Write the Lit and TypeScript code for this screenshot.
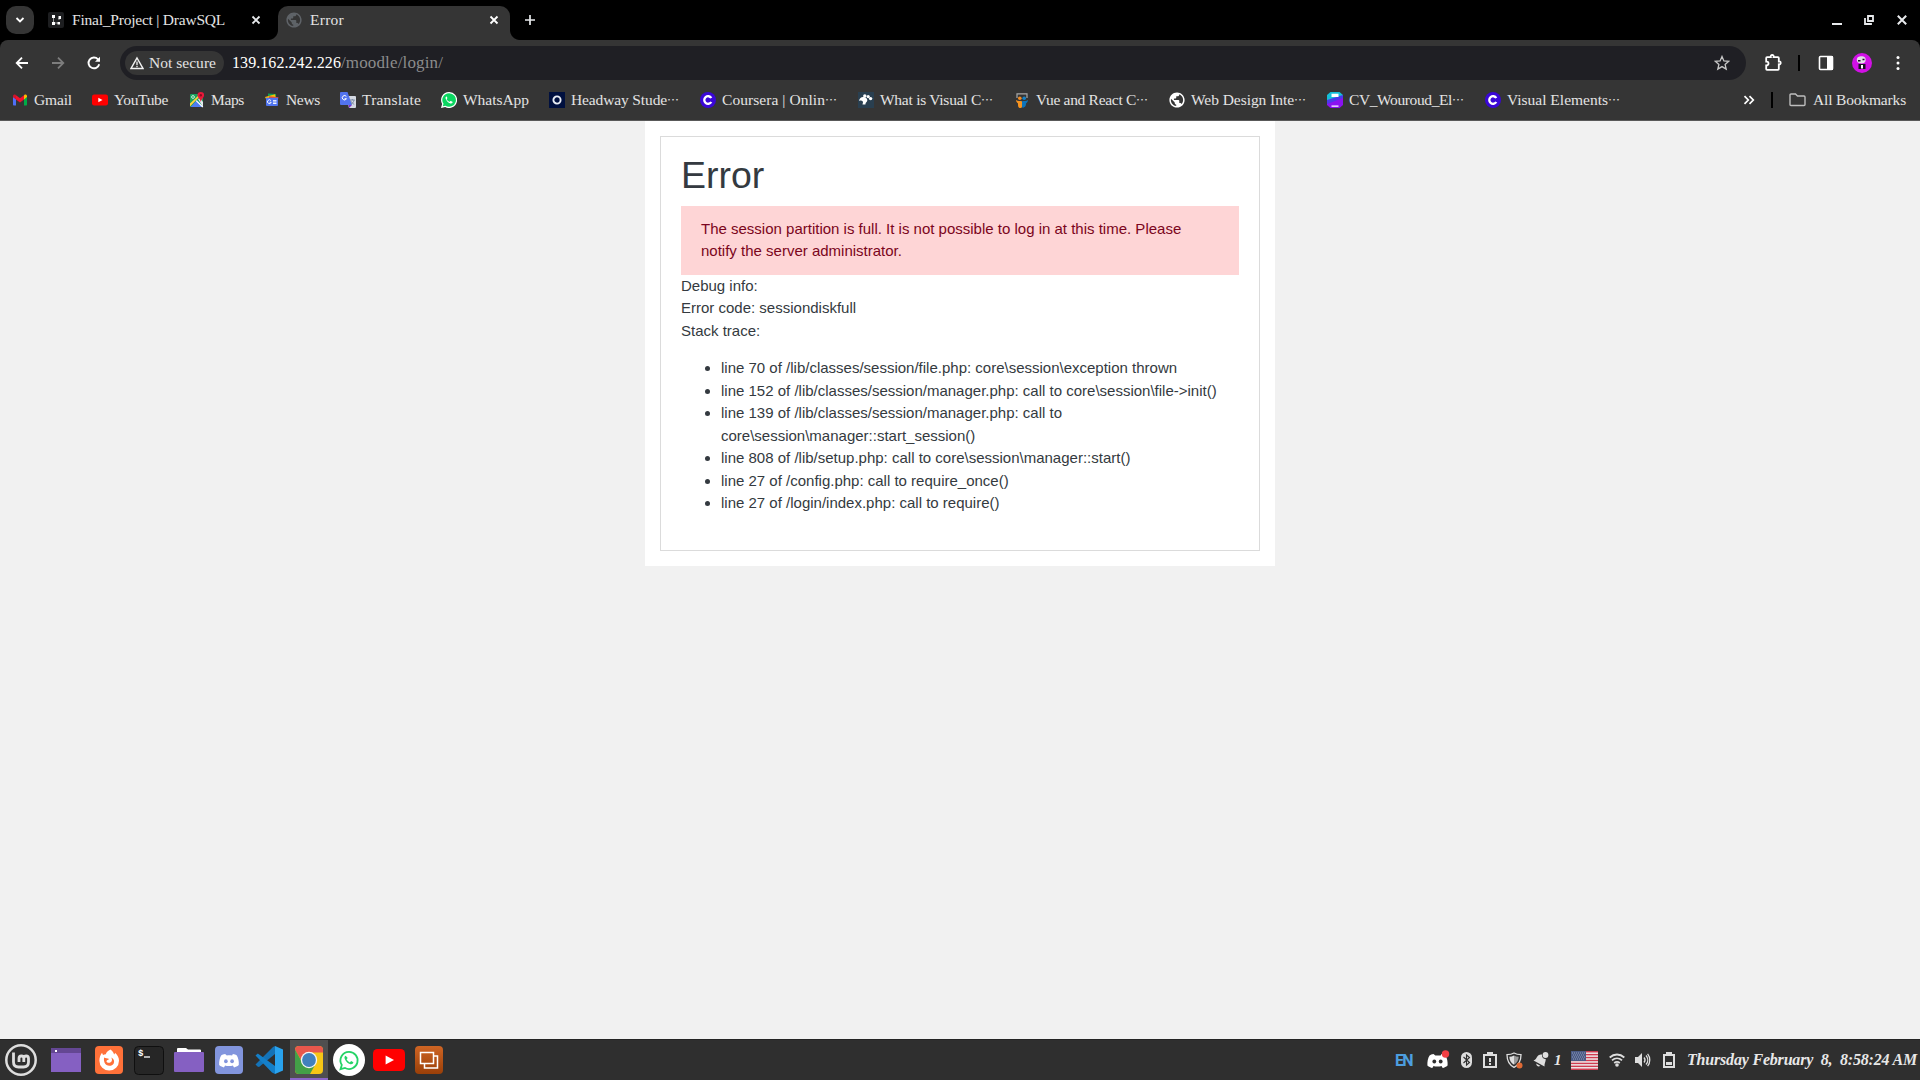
import { LitElement, html, css, svg, nothing } from "lit";
import { customElement, property } from "lit/decorators.js";

const icon = (w: number, h: number, vb: string, body: unknown) =>
  html`<svg width=${w} height=${h} viewBox=${vb} fill="none">${body}</svg>`;

/* One line of text spread over a given width through letter spacing. */
@customElement("fit-text")
class FitText extends LitElement {
  @property() text = "";
  @property({ type: Number }) w = 0;
  @property({ type: Boolean }) more = false;
  static styles = css`
    :host { display: block; flex: none; white-space: pre; }
    .more { font-family: "Noto Sans CJK JP", sans-serif; font-size: 12px; line-height: 1; letter-spacing: 0; }
  `;
  firstUpdated() {
    const t = this.renderRoot.querySelector(".t") as HTMLElement;
    const target = this.w - (this.more ? 12 : 0);
    const s = (target - t.getBoundingClientRect().width) / this.text.length;
    t.style.letterSpacing = s.toFixed(3) + "px";
    this.style.width = this.w + "px";
  }
  render() {
    return html`<span class="t">${this.text}</span>${this.more ? html`<span class="more" lang="ja">…</span>` : nothing}`;
  }
}

const close = (c = "#e8eaed") => icon(10, 10, "0 0 10 10", svg`<path d="M1.5 1.5l7 7M8.5 1.5l-7 7" stroke=${c} stroke-width="1.8"/>`);
const globe = (bg: string) => icon(16, 16, "1.5 1.5 21 21", svg`
  <path d="M12 2C6.48 2 2 6.48 2 12s4.48 10 10 10 10-4.48 10-10S17.52 2 12 2zm-1 17.93c-3.95-.49-7-3.85-7-7.93 0-.62.08-1.21.21-1.79L9 15v1c0 1.1.9 2 2 2v1.93zm6.9-2.54c-.26-.81-1-1.39-1.9-1.39h-1v-3c0-.55-.45-1-1-1H8v-2h2c.55 0 1-.45 1-1V7h2c1.1 0 2-.9 2-2v-.41c2.930 1.190 5 4.060 5 7.410 0 2.080-.8 3.970-2.100 5.390z" fill=${bg}/>
  <path d="M4.500 7.500L8 6l4-3.500 2.500 1L13 6.500l-3 1L9.500 9.500 7 10.500v1.500h6l1.500 1.500V17l3 1-4 3-2-1v-2L4 10z" fill=${bg} opacity=".35"/>`);
const coursera = icon(16, 16, "0 0 16 16", svg`<circle cx="8" cy="8" r="8" fill="#3a07d6"/><path d="M11.3 6A3.8 3.8 0 1 0 11.3 10" stroke="#fff" stroke-width="2.3"/>`);
const waPhone = svg`<path d="M5.6 4.4c-.9.3-1.3 1.2-.9 2.3.9 2.3 2.4 3.9 4.7 4.7 1.1.3 2-.1 2.2-1.1.1-.3 0-.5-.2-.6l-1.5-.7c-.3-.1-.5 0-.7.3-.3.4-.5.7-.9.5-1.200-.5-2.100-1.400-2.600-2.500-.1-.3.5-.6.6-1.100.1-.3-.4-1.200-.5-1.600-.1-.2-.1-.2-.2-.2z" fill="#fff"/>`;

const gmail = icon(16, 16, "0 0 16 16", svg`
  <path d="M1 4.5v8.2q0 .8.8.8H4V6.800z" fill="#4f6ff5"/><path d="M15 4.500v8.200q0 .8-.8.800H12V6.800z" fill="#00ac47"/>
  <path d="M12 3.600v3.800l3-2.300V4c0-1.500-1.600-2-2.500-1.300z" fill="#ffba00"/>
  <path d="M4 7.400V3.200L8 6.300l4-3.100v4.200l-4 3z" fill="#f4102c"/><path d="M1 4.200v1l3 2.200V3.200l-.5-.4C2.500 2 1 2.700 1 4.200z" fill="#d0142a"/>`);
const youtube = (w: number, h: number) => icon(w, h, "0 0 16 11", svg`<rect width="16" height="11" rx="2.2" fill="#f00"/><path d="M6.300 3.200v4.600l4.200-2.300z" fill="#fff"/>`);
const maps = icon(16, 16, "0 0 16 16", svg`
  <rect x="1" y="2" width="13" height="13" rx="1" fill="#19a05c"/><path d="M1.500 15L8 8l6 7z" fill="#4f7df3"/>
  <path d="M9 7l2-1 3 4v5z" fill="#e6e9ee"/><path d="M1 11.500L11 2h2L1 14.500z" fill="#ffd23f"/><path d="M7.200 8.600l6.600 6.400" stroke="#fff" stroke-width="1.300"/>
  <circle cx="4" cy="5" r="1.400" stroke="#d8f5e5" stroke-width=".9"/>
  <path d="M11.800 0a3.300 3.300 0 0 1 3.300 3.300c0 2.400-2.600 3.400-3.300 6.700-.7-3.300-3.300-4.300-3.300-6.700A3.300 3.300 0 0 1 11.800 0z" fill="#e8193a"/><circle cx="11.800" cy="3.300" r="1.200" fill="#8b0d20"/>`);
const news = icon(16, 16, "0 0 16 16", svg`
  <path d="M4 1.500l8 .6v4H4z" fill="#0f9d58"/><path d="M1 5l10-2.800L12 7H2z" fill="#fbbc04"/><path d="M5 4.300l9.500 1-1 4H5z" fill="#ea4335"/>
  <path d="M2 5.800h12v7.200q0 1-1 1H3q-1 0-1-1z" fill="#4f74f0"/><path d="M7 8.700A1.900 1.900 0 1 0 7.200 10.300H5.600M9 8.600h3.500M9 10h3.500M9 11.500h3.500" stroke="#fff" stroke-width=".9"/>`);
const translate = icon(16, 16, "0 0 16 16", svg`
  <path d="M6 4h9q1 0 1 1v10q0 1-1 1H9z" fill="#d4d9e2"/><path d="M8.500 13H12l-3 3z" fill="#7b2fd0"/>
  <path d="M1 0h6.500L12 13H1q-1 0-1-1V1q0-1 1-1z" fill="#5273ee"/>
  <path d="M6.400 4.600A2.200 2.200 0 1 0 6.500 6.700H4.600" stroke="#fff" stroke-width="1"/><path d="M10 8h4.800M12.300 7v1M14 8.200c-.4 1.800-1.600 3.200-3 4M11 9.200c.6 1.400 1.800 2.600 3.200 3.200" stroke="#687a96" stroke-width=".8"/>`);
const whatsapp = icon(16, 16, "0 0 16 16", svg`<path d="M8 0a8 8 0 1 1-3.800 15L0 16l1.100-4A8 8 0 0 1 8 0z" fill="#fff"/><path d="M8 1.200a6.800 6.800 0 1 1-3.600 12.500l-2.600.6.700-2.500A6.800 6.800 0 0 1 8 1.200z" fill="#0cd661"/>${waPhone}`);
const headway = icon(16, 16, "0 0 16 16", svg`<rect width="16" height="16" fill="#00103f"/><circle cx="8" cy="8" r="3.600" stroke="#e8edf5" stroke-width="1.900"/>`);
const visual = icon(16, 16, "0 0 16 16", svg`<rect width="16" height="16" fill="#293f50"/>
  <path d="M1 9C1.500 6 3.500 4.500 6 5c2 .4 3.500 1.800 3.300 3.500-.2 1.500-1.800 1.500-1.900 4H4.500c.2-1.300.8-2 .3-3C4 8.300 2.500 8.300 1 9z" fill="#fff"/>
  <circle cx="6.800" cy="4" r="1.700" fill="#fff"/><circle cx="10.200" cy="4.600" r="1.600" fill="#fff"/><circle cx="12.600" cy="6.600" r="1.700" fill="#fff"/>`);
const vue = icon(16, 16, "0 0 16 16", svg`
  <path d="M3 6V1.800h10V6" stroke="#a9a9a9" stroke-width="1.200"/><circle cx="5.800" cy="6.300" r="1.800" fill="#f28b20"/><circle cx="10.200" cy="6.300" r="1.800" fill="#1583c9"/>
  <path d="M2 8c2 1.500 4 .6 6 1.200v5.300q0 1.500-1.500 1.500C4 16 4 14 4 11.500 3 10.500 2 9.500 2 8z" fill="#f7931e"/><path d="M14 8c-2 1.500-4 .6-6 1.200v5.300q0 1.500 1.200 1.200C11.500 15 12 14 12 11.500 13 10.500 14 9.500 14 8z" fill="#0f74b9"/>`);
const cv = icon(16, 16, "0 0 16 16", svg`
  <path d="M3.500 0h9L16 3v3L0 12V3z" fill="#15bfd8"/><path d="M0 11l16-7v9l-3.500 3h-9L0 13z" fill="#8b12f0"/><path d="M0 8l16-5v3L0 12z" fill="#4a3bea"/>
  <path d="M4.500 1.800h7V5h-7zM4.500 13.600h7v1.200h-7z" fill="#fff"/>`);

interface Mark { ic: unknown; t: string; tw: number; w: number; more?: boolean; }
const marks: Mark[] = [
  { ic: gmail, t: "Gmail", tw: 38, w: 80 },
  { ic: youtube(16, 12), t: "YouTube", tw: 54, w: 97 },
  { ic: maps, t: "Maps", tw: 33, w: 75 },
  { ic: news, t: "News", tw: 34, w: 76 },
  { ic: translate, t: "Translate", tw: 59, w: 101 },
  { ic: whatsapp, t: "WhatsApp", tw: 66, w: 108 },
  { ic: headway, t: "Headway Stude", tw: 108, w: 151, more: true },
  { ic: coursera, t: "Coursera | Onlin", tw: 115, w: 158, more: true },
  { ic: visual, t: "What is Visual C", tw: 113, w: 156, more: true },
  { ic: vue, t: "Vue and React C", tw: 112, w: 155, more: true },
  { ic: globe("#fff"), t: "Web Design Inte", tw: 115, w: 158, more: true },
  { ic: cv, t: "CV_Wouroud_El", tw: 115, w: 158, more: true },
  { ic: coursera, t: "Visual Elements", tw: 113, w: 140, more: true },
];

@customElement("browser-chrome")
class BrowserChrome extends LitElement {
  static styles = css`
    :host { display: block; height: 121px; background: #000; color: #e3e3e3; font: 15.5px/20px "Liberation Serif", serif; }
    svg { display: block; flex: none; }
    .tabs { display: flex; height: 40px; align-items: center; }
    .search { width: 28px; height: 28px; margin-left: 6px; border-radius: 10px; background: #353535; display: grid; place-items: center; }
    .tab { display: flex; align-items: center; gap: 8px; }
    .tab.idle { width: 234px; box-sizing: border-box; padding-left: 14px; }
    .tab.idle svg:last-child { margin-left: 18px; }
    .curve { width: 10px; height: 10px; align-self: flex-end; flex: none; }
    .curve.l { background: radial-gradient(circle at 0 0, #000 9.5px, #353535 10.5px); }
    .curve.r { background: radial-gradient(circle at 10px 0, #000 9.5px, #353535 10.5px); }
    .tab.live { width: 232px; box-sizing: border-box; height: 34px; margin-top: 6px; padding: 0 11px 6px 8px; border-radius: 10px 10px 0 0; background: #353535; justify-content: space-between; }
    .name { display: flex; gap: 8px; align-items: center; }
    .plus { margin-left: 3px; }
    .win { margin-left: auto; display: flex; align-items: center; gap: 21px; padding-right: 13px; }
    .win svg:last-child { margin-left: 1px; }
    .bars { height: 80px; background: #353535; border-radius: 8px 8px 0 0; border-bottom: 1px solid #595959; }
    .nav { display: flex; height: 46px; align-items: center; }
    .arrows { display: flex; gap: 20px; padding-left: 14px; width: 106px; box-sizing: border-box; flex: none; margin-right: 14px; }
    .omni { display: flex; align-items: center; width: 1626px; height: 34px; box-sizing: border-box; padding: 0 16px 0 5px; border-radius: 17px; background: #1f1f24; }
    .chip { display: flex; align-items: center; gap: 5px; width: 99px; height: 24px; box-sizing: border-box; padding-left: 5px; border-radius: 12px; background: #353535; margin-right: 8px; }
    .host { color: #fff; font-size: 16px; }
    .path { color: #8c8c8c; font-size: 17px; }
    .star { margin-left: auto; }
    .tools { display: flex; align-items: center; flex: 1; padding-left: 17px; }
    .rule { width: 2px; height: 16px; background: #000; }
    .rule.a { margin: 0 18px 0 15px; }
    .avatar { margin: 0 18px; }
    .marks { display: flex; height: 28px; align-items: center; padding-left: 12px; }
    .mark { display: flex; align-items: center; gap: 6px; }
    .end { display: flex; align-items: center; margin-left: auto; padding-right: 14px; }
    .rule.b { margin: 0 16px; }
    .end fit-text { margin-left: 7px; }
  `;
  render() {
    return html`
      <div class="tabs">
        <div class="search">${icon(10, 8, "0 0 10 8", svg`<path d="M1.5 2L5 5.500 8.500 2" stroke="#fff" stroke-width="1.800"/>`)}</div>
        <div class="tab idle">
          ${icon(16, 16, "0 0 16 16", svg`<rect width="16" height="16" rx="2" fill="#1d1e20"/><path d="M5.500 5v7M5.500 11H10M10 7h2V5" stroke="#aaa" stroke-width=".9"/><path d="M4 3h3v3H4zM4 10h3v3H4zM9.500 10h2.500v2.500H9.500zM10.500 4h2.500v3h-2.500z" fill="#fff"/>`)}
          <fit-text text="Final_Project | DrawSQL" w="153"></fit-text>${close()}
        </div>
        <div class="curve l"></div>
        <div class="tab live">
          <div class="name">${globe("#5f6368")}<fit-text text="Error" w="34"></fit-text></div>${close("#fff")}
        </div>
        <div class="curve r"></div>
        <div class="plus">${icon(14, 14, "0 0 14 14", svg`<path d="M7 2v10M2 7h10" stroke="#e8eaed" stroke-width="1.700"/>`)}</div>
        <div class="win">
          ${icon(10, 10, "0 0 10 10", svg`<path d="M0 9h10" stroke="#e8eaed" stroke-width="2"/>`)}
          ${icon(12, 12, "0 0 12 12", svg`<path d="M5 2h5v5H5zM2 4v6h6V9" stroke="#e8eaed" stroke-width="1.800"/>`)}
          ${icon(10, 10, "0 0 10 10", svg`<path d="M.8.8l8.400 8.400M9.200.8L.8 9.200" stroke="#e8eaed" stroke-width="2"/>`)}
        </div>
      </div>
      <div class="bars">
        <div class="nav">
          <div class="arrows">
            ${icon(16, 16, "0 0 16 16", svg`<path d="M14 8H3M8 2.700L2.700 8 8 13.300" stroke="#fff" stroke-width="1.800"/>`)}
            ${icon(16, 16, "0 0 16 16", svg`<path d="M2 8h11M8 2.700L13.300 8 8 13.300" stroke="#7d7d7d" stroke-width="1.800"/>`)}
            ${icon(16, 16, "0 0 16 16", svg`<path d="M13.200 9.200A5.400 5.400 0 1 1 12 4.300l1 1.200" stroke="#fff" stroke-width="1.900"/><path d="M14 1.800v5H9z" fill="#fff"/>`)}
          </div>
          <div class="omni">
            <div class="chip">
              ${icon(14, 14, "0 0 14 14", svg`<path d="M7 2L13 12.500H1z" stroke="#f1f1f1" stroke-width="1.500"/><path d="M7 5.500v3.400M7 9.800v1.400" stroke="#f1f1f1" stroke-width="1.300"/>`)}
              <fit-text text="Not secure" w="67"></fit-text>
            </div>
            <fit-text class="host" text="139.162.242.226" w="109"></fit-text><fit-text class="path" text="/moodle/login/" w="102"></fit-text>
            <div class="star">${icon(16, 16, "0 0 16 16", svg`<path d="M8 1.500l1.900 4.400 4.800.4-3.600 3.100 1.100 4.700L8 11.600l-4.200 2.500 1.100-4.700L1.300 6.300l4.800-.4z" stroke="#c7c7c7" stroke-width="1.300"/>`)}</div>
          </div>
          <div class="tools">
            ${icon(20, 20, "0 0 20 20", svg`<path d="M4 4.200h3.800C7.500 2.800 8.200 2 9.200 2s1.800.8 1.400 2.200H15q.8 0 .8.800v3.500c1.300-.2 1.900.5 1.900 1.400s-.7 1.600-1.900 1.400V16q0 .8-.8.800H4q-.8 0-.8-.8v-3.700c1.600 0 2.300-.8 2.300-1.900S4.800 8.500 3.200 8.600V5q0-.8.8-.8z" stroke="#fff" stroke-width="1.800"/>`)}
            <div class="rule a"></div>
            ${icon(16, 16, "0 0 16 16", svg`<rect x="1.500" y="1.500" width="13" height="13" rx="1" stroke="#fff" stroke-width="1.600"/><path d="M9 1h6v14H9z" fill="#fff"/>`)}
            <div class="avatar">${icon(20, 20, "0 0 20 20", svg`<circle cx="10" cy="10" r="10" fill="#d210e6"/><path d="M6.500 11h7v5h-7z" fill="#1a1020"/><path d="M4.800 7c0-3 2-3.800 4.700-3.800S14 4.500 13.600 7.400c-.3 2-1.600 3-4 3S4.800 9.500 4.800 7z" fill="#e4dde8"/><path d="M6 7.800h2.500M10.500 6.500h2" stroke="#1a1020" stroke-width="1.500"/><path d="M9 12h2v3.500H9z" fill="#fff"/>`)}</div>
            ${icon(16, 16, "0 0 16 16", svg`<circle cx="8" cy="2.500" r="1.500" fill="#fff"/><circle cx="8" cy="8" r="1.500" fill="#fff"/><circle cx="8" cy="13.500" r="1.500" fill="#fff"/>`)}
          </div>
        </div>
        <div class="marks">
          ${marks.map((m) => html`<div class="mark" style="width:${m.w}px">${m.ic}<fit-text .text=${m.t} .w=${m.tw} ?more=${m.more}></fit-text></div>`)}
          <div class="end">
            ${icon(12, 10, "0 0 12 10", svg`<path d="M1.500 1.200L5.300 5 1.500 8.800M6.500 1.200L10.300 5 6.500 8.800" stroke="#fff" stroke-width="1.700"/>`)}
            <div class="rule b"></div>
            ${icon(17, 14, "0 0 17 14", svg`<path d="M1 2q0-1 1-1h4.500l2 2H15q1 0 1 1v7.500q0 1-1 1H2q-1 0-1-1z" stroke="#bdbdbd" stroke-width="1.400"/>`)}
            <fit-text text="All Bookmarks" w="93"></fit-text>
          </div>
        </div>
      </div>`;
  }
}

const trace = [
  "line 70 of /lib/classes/session/file.php: core\\session\\exception thrown",
  "line 152 of /lib/classes/session/manager.php: call to core\\session\\file->init()",
  "line 139 of /lib/classes/session/manager.php: call to core\\session\\manager::start_session()",
  "line 808 of /lib/setup.php: call to core\\session\\manager::start()",
  "line 27 of /config.php: call to require_once()",
  "line 27 of /login/index.php: call to require()",
];

@customElement("error-page")
class ErrorPage extends LitElement {
  static styles = css`
    :host { display: block; height: 918px; background: #f1f1f1; color: #343a40; font: 15px/22.5px "Liberation Sans", Arial, sans-serif; }
    .sheet { width: 630px; height: 445px; margin: 0 auto; padding: 15px; box-sizing: border-box; background: #fff; }
    .frame { height: 415px; padding: 15.8px 20px; box-sizing: border-box; border: 1px solid #dbdbdb; }
    h1 { margin: 0 0 8px; font-size: 37.5px; line-height: 45px; font-weight: 400; }
    .alert { padding: 12px 20px; background: #fed5d6; color: #7b0520; }
    ul { margin: 15px 0 0; padding-left: 40px; }
  `;
  render() {
    return html`<div class="sheet"><div class="frame">
      <h1>Error</h1>
      <div class="alert">The session partition is full. It is not possible to log in at this time. Please notify the server administrator.</div>
      <div>Debug info:</div><div>Error code: sessiondiskfull</div><div>Stack trace:</div>
      <ul>${trace.map((l) => html`<li>${l}</li>`)}</ul>
    </div></div>`;
  }
}

const discordFace = (fill: string, eye: string) => svg`<path d="M6.500 1.500C4.800 1.800 3.500 2.300 2.600 2.900.9 5.500.2 9 .4 13c1.600 1.400 3.200 2.100 4.900 2.500l1.200-2c1.900.7 6.100.7 8 0l1.200 2c1.700-.4 3.300-1.100 4.900-2.500.3-4-.5-7.500-2.200-10.100-.9-.6-2.200-1.100-3.900-1.400l-.8 1.600c-1.700-.3-3.700-.3-5.400 0z" fill=${fill}/><ellipse cx="7.300" cy="9" rx="1.900" ry="2.100" fill=${eye}/><ellipse cx="13.700" cy="9" rx="1.900" ry="2.100" fill=${eye}/>`;
const chromeIcon = icon(28, 28, "0 0 28 28", svg`
  <defs><clipPath id="c"><rect width="28" height="28" rx="4"/></clipPath></defs>
  <g clip-path="url(#c)"><rect width="28" height="28" fill="#f6c615"/><path d="M0 0h28v6.500H14L8 17 0 4z" fill="#e8574c"/><path d="M0 3.500l7.500 13.500L20 19l-5 9H0z" fill="#43a047"/>
  <circle cx="14" cy="14" r="8.200" fill="#f5f5f5"/><circle cx="14" cy="14" r="6.900" fill="#4180bd"/></g>`);

const apps: { w: number; ic: unknown; live?: boolean }[] = [
  { w: 46, ic: icon(32, 32, "0 0 32 32", svg`<circle cx="16" cy="16" r="14.700" stroke="#dedede" stroke-width="2.500"/><path d="M8.500 8.500v9.500q0 5 5 5h5q5 0 5-5v-3.500q0-2.500-2.300-2.500t-2.400 2.500V18v-3.500q0-2.500-2.400-2.500T14 14.500V18" stroke="#dedede" stroke-width="2.800"/>`) },
  { w: 44, ic: icon(30, 24, "0 0 30 24", svg`<path d="M0 0h30v24H0z" fill="#8560c2"/><path d="M0 0h30v5H0z" fill="#644793"/><path d="M4 2h2v2H4z" fill="#fff"/>`) },
  { w: 39, ic: icon(28, 28, "0 0 28 28", svg`<rect width="28" height="28" rx="4" fill="#ff7139"/><path d="M15.500 3.500c2.200 1.600 3.200 3.300 3.600 5 .6-.3.900-1 .900-1.700 2.600 2.300 4 5 4 8a9.800 9.800 0 0 1-19.600 0c0-3.200 1-6 2.600-8l1 2.300c.9-.6 1.700-.9 2.800-.9.5-2.300 2.300-3.500 4.700-4.700z" fill="#fff"/><path d="M9.200 11.500c1.500.7 3 .8 5 1.400-.7 1-2.600 1-2.800 2.400.8 2.200 4.600 2 5.400-.5.4-1.300.1-2.300-.7-3.300 2.600 1 3.700 3.700 2.600 6-1.700 3.300-7.600 3.200-9.100-.7-.7-2-.9-3.800-.4-5.300z" fill="#ff7139"/>`) },
  { w: 40, ic: icon(30, 29, "0 0 30 29", svg`<rect x=".5" y=".5" width="29" height="28" rx="4" fill="#262626" stroke="#0f0f0f"/><text x="4" y="10" font-family="Liberation Mono" font-size="9" font-weight="700" fill="#fff">$</text><path d="M10 11h6" stroke="#fff" stroke-width="1.300"/>`) },
  { w: 41, ic: icon(30, 24, "0 0 30 24", svg`<path d="M3 1q0-1 1-1h8l2 1.500h12q1 0 1 1V6H3z" fill="#fff"/><rect y="4" width="30" height="20" rx="1" fill="#8560c2"/>`) },
  { w: 40, ic: icon(28, 28, "0 0 28 28", svg`<rect width="28" height="28" rx="4" fill="#8295dd"/><g transform="translate(3.800 6.500) scale(.97)">${discordFace("#fff", "#8295dd")}</g>`) },
  { w: 35, ic: icon(28, 28, "0 0 28 28", svg`<path d="M20 0v8L4 21l-1.500-.4L.5 18.500 18 1z" fill="#1473b8"/><path d="M.5 9.500l2.300-2L20 20v8l-3-1.500z" fill="#147fc9"/><path d="M20 0l8 3.500v21L20 28z" fill="#29a3ef"/>`) },
  { w: 38, live: true, ic: chromeIcon },
  { w: 45, ic: icon(32, 32, "0 0 32 32", svg`<circle cx="16" cy="16" r="16" fill="#fff"/><path d="M16 7.800a8.600 8.600 0 1 1-4 16.200l-4.500 1.200L8.800 21A8.600 8.600 0 0 1 16 7.800z" stroke="#25d366" stroke-width="1.800"/><path d="M12.700 11.800c-1.400.6-1.500 2-.8 3.400 1.200 2.600 3 4.300 5.500 5 1.400.4 2.800-.4 3-1.900l-2.300-1.200-1.300 1.300c-1.500-.7-2.500-1.700-3.200-3.100l1.100-1.200z" fill="#25d366"/>`) },
  { w: 42, ic: youtube(32, 22) },
  { w: 28, ic: icon(28, 28, "0 0 28 28", svg`<defs><linearGradient id="o" x2="0" y2="1"><stop stop-color="#cf6524"/><stop offset="1" stop-color="#9a3f08"/></linearGradient></defs><rect width="28" height="28" rx="4" fill="url(#o)"/><path d="M5.500 6.500h13v11h-13z M18.500 10h4v12h-13v-4.500" stroke="#fff" stroke-width="1.500"/>`) },
];

@customElement("task-bar")
class TaskBar extends LitElement {
  static styles = css`
    :host { display: flex; height: 41px; box-sizing: border-box; border-top: 1px solid #242424; background: #2f2f2f; align-items: center; color: #e8e8e8; }
    svg { display: block; flex: none; }
    .apps { display: flex; height: 40px; align-items: center; padding-left: 5px; }
    .app { display: flex; height: 40px; box-sizing: border-box; align-items: center; flex: none; }
    .app.live { background: #4f4f4f; border-bottom: 2px solid #8a66c8; padding: 0 5px; }
    .app.live svg { margin-top: 1px; }
    .app.live + .app { padding-left: 5px; }
    .tray { display: flex; align-items: center; margin-left: auto; width: 525px; }
    .lang { font: 700 16px "Roboto", sans-serif; color: #4d9fe0; }
    .slot { flex: none; }
    .count, .clock { font: italic 700 16px "Liberation Serif", serif; }
    .count { font-size: 15px; }
  `;
  slotOf(w: number, c: unknown) {
    return html`<div class="slot" style="width:${w}px">${c}</div>`;
  }
  render() {
    return html`
      <div class="apps">${apps.map((a) => html`<div class="app ${a.live ? "live" : ""}" style="width:${a.w}px">${a.ic}</div>`)}</div>
      <div class="tray">
        ${this.slotOf(32, html`<fit-text class="lang" text="EN" w="17"></fit-text>`)}
        ${this.slotOf(34, icon(23, 20, "0 0 23 20", svg`<g transform="translate(0 2.500)">${discordFace("#fff", "#2f2f2f")}</g><circle cx="18.500" cy="4" r="3.700" fill="#f23f43"/>`))}
        ${this.slotOf(22, icon(11, 16, "0 0 11 16", svg`<rect width="11" height="16" rx="5.500" fill="#dedede"/><path d="M2.500 5l6 5.500-3 2.500V3l3 2.500-6 5.500" stroke="#2f2f2f" stroke-width="1.100"/>`))}
        ${this.slotOf(23, icon(14, 16, "0 0 14 16", svg`<path d="M1 3h12v12H1z" stroke="#dedede" stroke-width="2"/><path d="M4 0h6v4H4z" fill="#dedede"/><path d="M7 6v4M7 11v2" stroke="#dedede" stroke-width="2"/>`))}
        ${this.slotOf(27, icon(17, 17, "0 0 17 17", svg`<path d="M8 1c2 1.200 4.300 1.700 7 1.700 0 6-2 10-7 12.600C3 12.700 1 8.700 1 2.700 3.700 2.700 6 2.200 8 1z" stroke="#dedede" stroke-width="1.300"/><path d="M8 3.500v9.300C5 11 3.500 8.500 3.300 4.800 5 4.700 6.500 4.300 8 3.500z" fill="#dedede"/><path d="M8 3.500v9.300C11 11 12.500 8.500 12.700 4.800 11 4.700 9.500 4.300 8 3.500z" fill="#9a9a9a"/><circle cx="13.500" cy="13.500" r="3" fill="#e06a35"/>`))}
        ${this.slotOf(21, icon(16, 16, "0 0 16 16", svg`<path d="M.5 8.500c2.500-.5 2.700-2.500 4-4.200C5.700 2.700 7.300 2 9 2.600A3.600 3.600 0 0 0 12.700 7c.3 2.500-1.500 4-1.200 7.500z" fill="#dedede"/><path d="M3.200 11.500l4 2.200c-1.300 1.800-4 .3-4-2.200z" fill="#dedede"/><circle cx="12.500" cy="3" r="2.900" fill="#dedede"/>`))}
        ${this.slotOf(17, html`<span class="count">1</span>`)}
        ${this.slotOf(38, icon(27, 19, "0 0 27 19", svg`<path d="M0 0h27v19H0z" fill="#eee"/>${[0, 1, 2, 3, 4, 5, 6].map((i) => svg`<rect y=${i * 2.92} width="27" height="1.46" fill="#cf3b50"/>`)}<path d="M0 0h15v10H0z" fill="#4a5a85"/><path d="M1 2h13M2 4h12M1 6h13M2 8h12" stroke="#a5aec8" stroke-width=".8" stroke-dasharray="1 1"/>`))}
        ${this.slotOf(26, icon(16, 14, "0 0 16 14", svg`<path d="M.7 4.500c4.400-4 10.200-4 14.600 0M3 7.300c3-2.700 7-2.700 10 0M5.200 10c1.800-1.500 3.800-1.500 5.600 0" stroke="#dedede" stroke-width="1.800"/><circle cx="8" cy="12" r="1.800" fill="#dedede"/>`))}
        ${this.slotOf(28, icon(16, 16, "0 0 16 16", svg`<path d="M0 5h3l4-4v14l-4-4H0z" fill="#dedede"/><path d="M9 5.500c1.300 1.500 1.300 3.500 0 5M11 3.500c2.300 2.600 2.300 6.400 0 9M12.600 1.800c2.900 3.500 2.900 8.900 0 12.400" stroke="#dedede" stroke-width="1.300"/>`))}
        ${this.slotOf(24, icon(12, 16, "0 0 12 16", svg`<path d="M1 3h10v12H1z" stroke="#dedede" stroke-width="2"/><path d="M3 0h6v3H3zM3 10h6v3H3z" fill="#dedede"/>`))}
        <fit-text class="clock" text="Thursday February  8,  8:58:24 AM" w="230"></fit-text>
      </div>`;
  }
}

@customElement("app-root")
class AppRoot extends LitElement {
  static styles = css`:host { display: block; width: 1920px; height: 1080px; overflow: hidden; }`;
  render() {
    return html`<browser-chrome></browser-chrome><error-page></error-page><task-bar></task-bar>`;
  }
}
